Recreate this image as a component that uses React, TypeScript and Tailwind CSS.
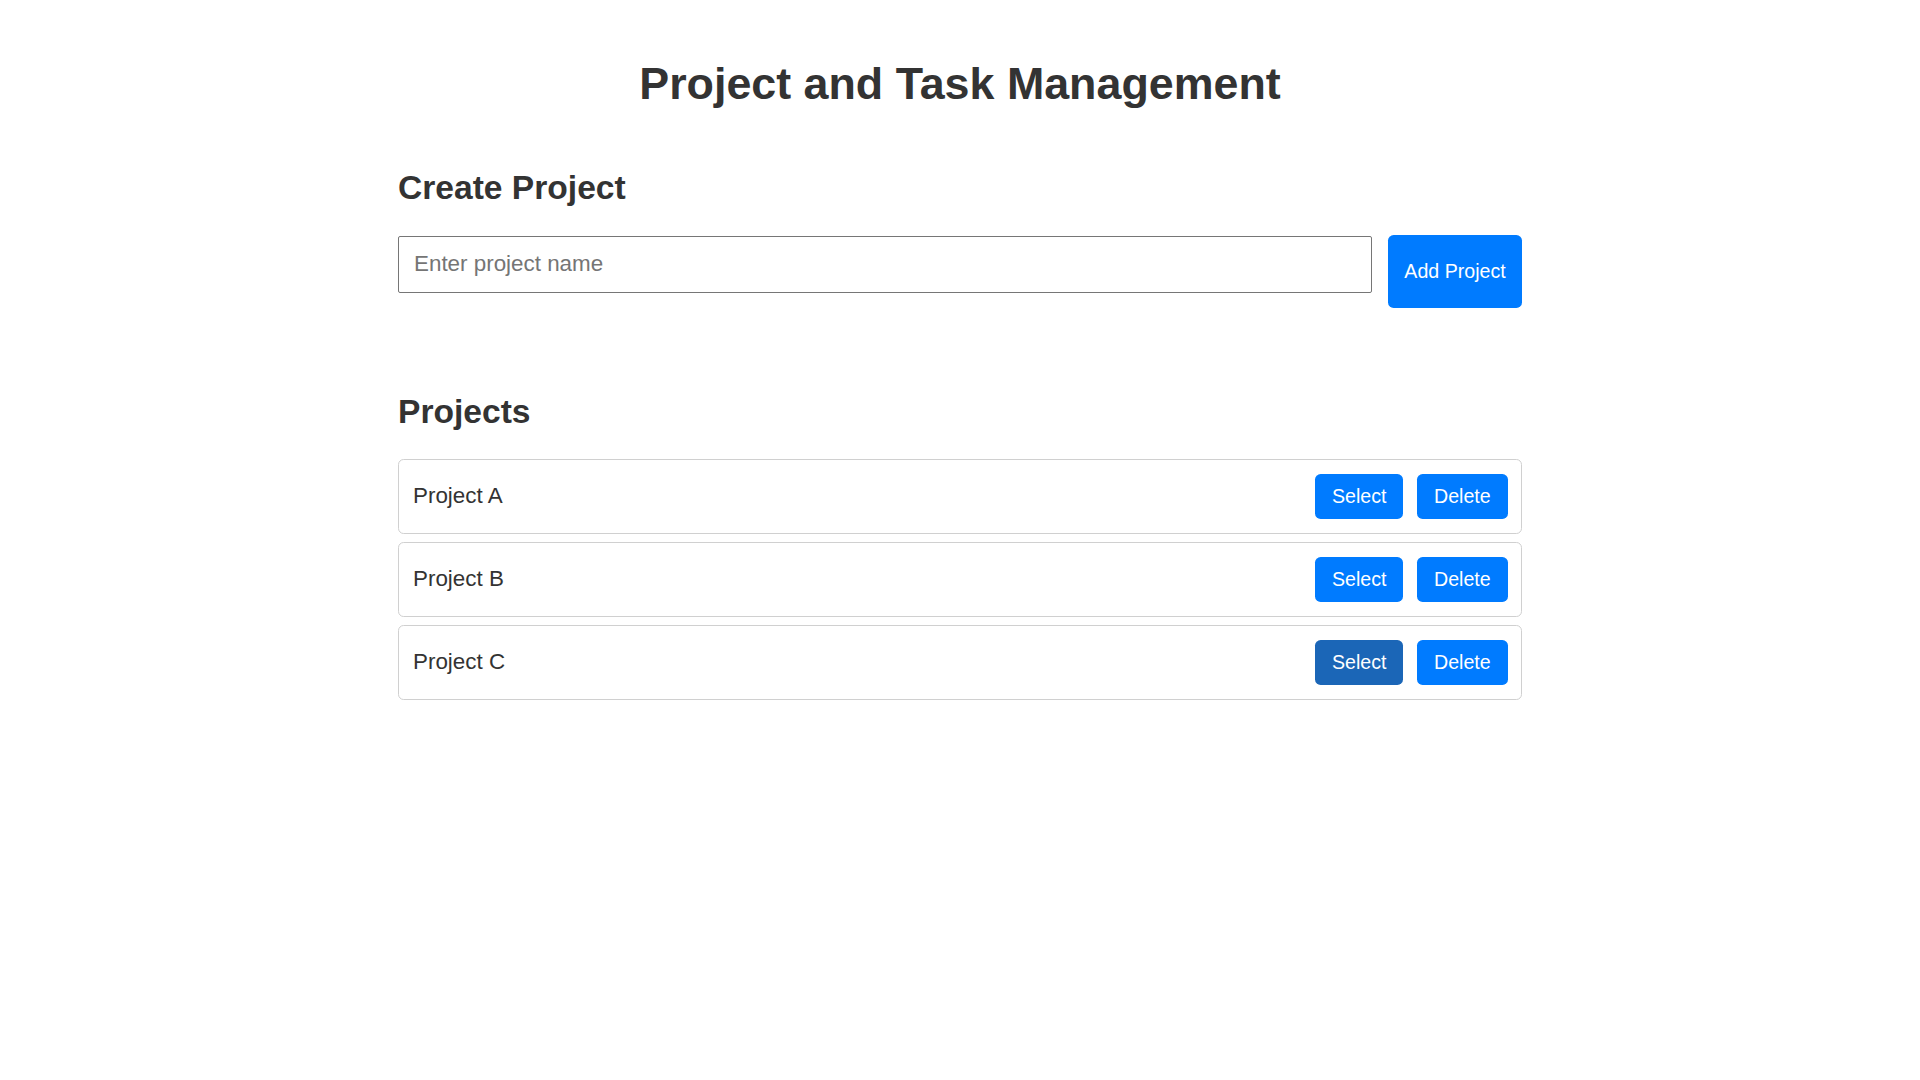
import React from "react";

const projects = [
  { name: "Project A", selected: false },
  { name: "Project B", selected: false },
  { name: "Project C", selected: true },
];

export default function App() {
  return (
    <div className="min-h-screen bg-white font-['Liberation_Sans',Arial,sans-serif] text-[#333333]">
      <div className="mx-auto w-[1124px] pt-[56.5px]">
        <h1 className="text-center text-[44.8px] font-bold leading-[52px]">
          Project and Task Management
        </h1>

        <h2 className="mt-[59px] text-[33.6px] font-bold leading-[40px]">
          Create Project
        </h2>

        <div className="mt-[27.6px] flex items-start gap-[16px]">
          <input
            type="text"
            placeholder="Enter project name"
            className="mt-[0.7px] h-[57.5px] w-[974px] rounded-[2px] border border-[#767676] bg-white pb-[2px] pl-[15px] text-[22.4px] text-[#333333] outline-none placeholder:text-[#757575]"
          />
          <button className="h-[73px] w-[134px] rounded-[5.6px] bg-[#007bff] text-[19.6px] leading-[22.5px] text-white">
            Add Project
          </button>
        </div>

        <h2 className="mt-[83.8px] text-[33.6px] font-bold leading-[40px]">
          Projects
        </h2>

        <div className="mt-[27.2px] flex flex-col gap-[8.4px]">
          {projects.map((p) => (
            <div
              key={p.name}
              className="flex h-[74.6px] items-center justify-between rounded-[5.6px] border border-[#d0d0d0] pl-[14px] pr-[13.5px]"
            >
              <span className="text-[22.4px] leading-[26px]">{p.name}</span>
              <div className="flex gap-[14px]">
                <button
                  className={
                    p.selected
                      ? "rounded-[5.6px] bg-[#1b66b7] px-[16.8px] py-[11.2px] text-[19.6px] leading-[22.5px] text-white"
                      : "rounded-[5.6px] bg-[#007bff] px-[16.8px] py-[11.2px] text-[19.6px] leading-[22.5px] text-white"
                  }
                >
                  Select
                </button>
                <button className="rounded-[5.6px] bg-[#007bff] px-[16.8px] py-[11.2px] text-[19.6px] leading-[22.5px] text-white">
                  Delete
                </button>
              </div>
            </div>
          ))}
        </div>
      </div>
    </div>
  );
}
